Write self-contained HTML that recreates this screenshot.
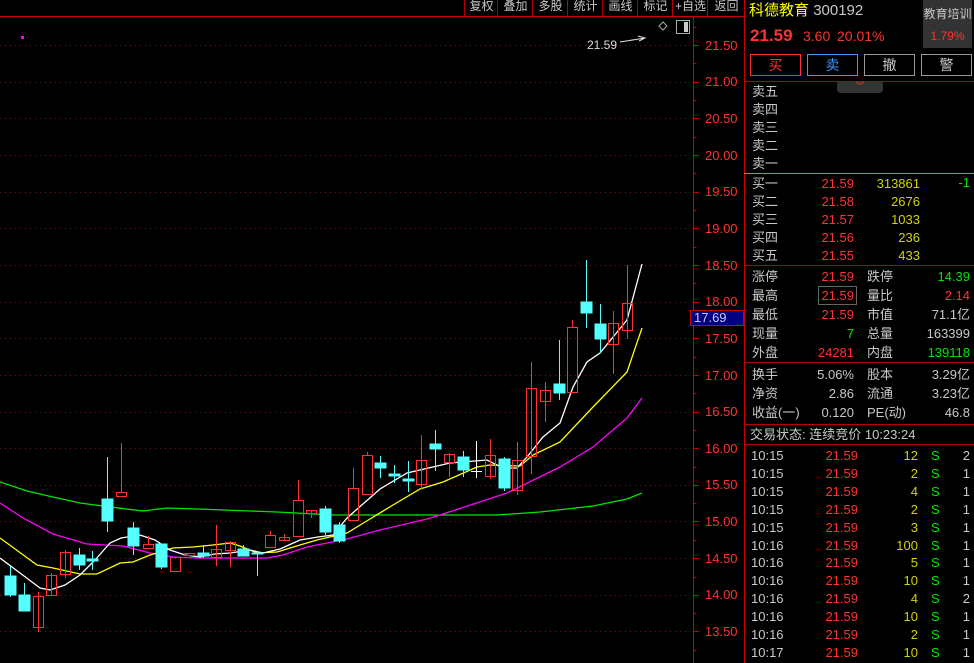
<!DOCTYPE html>
<html><head><meta charset="utf-8"><style>
body{margin:0;background:#000;width:974px;height:663px;overflow:hidden;position:relative;font-family:"Liberation Sans","Noto Sans CJK SC",sans-serif;font-size:13px;color:#c8c8c8}
.a{position:absolute;white-space:nowrap;line-height:16px}
.r{color:#ff3232}.y{color:#d2d200}.g{color:#00e600}.w{color:#c8c8c8}
.hl{position:absolute;height:1px;left:744px;width:230px;background:#b40000}
.btn{position:absolute;top:54px;height:20px;width:49px;text-align:center;line-height:20px;font-size:14px}
.menu{position:absolute;top:0;height:16px;line-height:13px;font-size:12px;text-align:center;border-left:1px solid #b40000;color:#c8c8c8}
</style></head><body>
<svg width="974" height="663" style="position:absolute;left:0;top:0">
<g stroke="#8a1010" stroke-width="1" stroke-dasharray="1,4">
<line x1="0" y1="45.5" x2="690" y2="45.5"/><line x1="0" y1="82.5" x2="690" y2="82.5"/><line x1="0" y1="118.5" x2="690" y2="118.5"/><line x1="0" y1="155.5" x2="690" y2="155.5"/><line x1="0" y1="192.5" x2="690" y2="192.5"/><line x1="0" y1="228.5" x2="690" y2="228.5"/><line x1="0" y1="265.5" x2="690" y2="265.5"/><line x1="0" y1="302.5" x2="690" y2="302.5"/><line x1="0" y1="338.5" x2="690" y2="338.5"/><line x1="0" y1="375.5" x2="690" y2="375.5"/><line x1="0" y1="412.5" x2="690" y2="412.5"/><line x1="0" y1="448.5" x2="690" y2="448.5"/><line x1="0" y1="485.5" x2="690" y2="485.5"/><line x1="0" y1="521.5" x2="690" y2="521.5"/><line x1="0" y1="558.5" x2="690" y2="558.5"/><line x1="0" y1="595.5" x2="690" y2="595.5"/><line x1="0" y1="631.5" x2="690" y2="631.5"/>
</g>
<line x1="0" y1="16.5" x2="744" y2="16.5" stroke="#c80000"/>
<line x1="693.5" y1="16" x2="693.5" y2="663" stroke="#c80000"/>
<line x1="744.5" y1="0" x2="744.5" y2="663" stroke="#c80000"/>
<g stroke="#c80000">
<path d="M693 45.5h6M693 82.5h6M693 118.5h6M693 155.5h6M693 192.5h6M693 228.5h6M693 265.5h6M693 302.5h6M693 338.5h6M693 375.5h6M693 412.5h6M693 448.5h6M693 485.5h6M693 521.5h6M693 558.5h6M693 595.5h6M693 631.5h6"/>
<path d="M693 27.5h3M693 63.5h3M693 100.5h3M693 137.5h3M693 173.5h3M693 210.5h3M693 247.5h3M693 283.5h3M693 320.5h3M693 357.5h3M693 393.5h3M693 430.5h3M693 467.5h3M693 503.5h3M693 540.5h3M693 577.5h3M693 613.5h3M693 650.5h3"/>
</g>
<rect x="21" y="36" width="3" height="3" fill="#ff00ff"/>
<!-- MA lines -->
<polyline fill="none" stroke="#00e600" stroke-width="1.3" points="0,482 27,491 53,497 80,503 110,507 143,511 167,508 197,509 250,511 277,512 333,515 497,515 540,512 593,506 627,499 642,493"/>
<polyline fill="none" stroke="#ff00ff" stroke-width="1.3" points="0,503 23,518 53,534 87,544 123,546 150,553 173,557 197,558 267,558 283,555 307,547 347,539 380,530 427,519 440,515 507,493 560,467 593,447 627,418 642,398"/>
<polyline fill="none" stroke="#ffff00" stroke-width="1.3" points="0,538 37,565 53,568 80,574 97,574 120,563 133,562 150,555 173,548 193,547 213,545 230,543 240,546 257,553 277,552 300,545 317,540 347,533 370,519 393,505 420,489 443,482 477,467 490,465 520,466 533,455 560,442 593,407 627,372 642,328"/>
<polyline fill="none" stroke="#ffffff" stroke-width="1.3" points="0,558 20,573 40,588 50,590 65,585 80,575 95,560 110,543 121,538 140,535 155,540 170,550 185,555 200,557 215,554 230,553 250,550 263,553 280,549 300,540 318,537 333,535 347,518 380,489 407,473 450,463 487,460 503,468 517,468 527,457 543,437 560,423 573,387 587,362 600,353 627,320 642,264"/>
<!-- candles -->
<g stroke="#55ffff" fill="#55ffff">
<line x1="10.5" y1="566" x2="10.5" y2="597"/><rect x="5" y="576" width="11" height="19"/>
<line x1="24.5" y1="583" x2="24.5" y2="611"/><rect x="19" y="595" width="11" height="16"/>
<line x1="79.5" y1="548" x2="79.5" y2="570"/><rect x="74" y="555" width="11" height="10"/>
<line x1="92.5" y1="551" x2="92.5" y2="570"/><rect x="87" y="559" width="11" height="2"/>
<line x1="107.5" y1="457" x2="107.5" y2="532"/><rect x="102" y="499" width="11" height="22"/>
<line x1="133.5" y1="522" x2="133.5" y2="555"/><rect x="128" y="528" width="11" height="18"/>
<line x1="161.5" y1="544" x2="161.5" y2="569"/><rect x="156" y="544" width="11" height="23"/>
<line x1="203.5" y1="545" x2="203.5" y2="558"/><rect x="198" y="553" width="11" height="3"/>
<line x1="243.5" y1="545" x2="243.5" y2="556"/><rect x="238" y="549" width="11" height="7"/>
<line x1="257.5" y1="551" x2="257.5" y2="576"/><rect x="252" y="553" width="11" height="1"/>
<line x1="325.5" y1="506" x2="325.5" y2="535"/><rect x="320" y="509" width="11" height="23"/>
<line x1="339.5" y1="522" x2="339.5" y2="543"/><rect x="334" y="525" width="11" height="16"/>
<line x1="380.5" y1="456" x2="380.5" y2="478"/><rect x="375" y="463" width="11" height="5"/>
<line x1="394.5" y1="465" x2="394.5" y2="483"/><rect x="389" y="474" width="11" height="2"/>
<line x1="408.5" y1="461" x2="408.5" y2="492"/><rect x="403" y="479" width="11" height="2"/>
<line x1="435.5" y1="430" x2="435.5" y2="471"/><rect x="430" y="444" width="11" height="5"/>
<line x1="463.5" y1="451" x2="463.5" y2="477"/><rect x="458" y="457" width="11" height="13"/>
<line x1="504.5" y1="457" x2="504.5" y2="491"/><rect x="499" y="459" width="11" height="29"/>
<line x1="559.5" y1="340" x2="559.5" y2="400"/><rect x="554" y="384" width="11" height="9"/>
<line x1="586.5" y1="260" x2="586.5" y2="328"/><rect x="581" y="302" width="11" height="11"/>
<line x1="600.5" y1="304" x2="600.5" y2="353"/><rect x="595" y="324" width="11" height="15"/>
</g>
<g stroke="#ffffff"><line x1="476.5" y1="441" x2="476.5" y2="478"/><line x1="471" y1="471.5" x2="482" y2="471.5"/></g>
<g stroke="#ff3232" fill="none">
<line x1="38.5" y1="592" x2="38.5" y2="632"/><rect x="33.5" y="596.5" width="10" height="31"/>
<line x1="51.5" y1="573" x2="51.5" y2="596"/><rect x="46.5" y="575.5" width="10" height="20"/>
<line x1="65.5" y1="550" x2="65.5" y2="578"/><rect x="60.5" y="552.5" width="10" height="22"/>
<line x1="121.5" y1="443" x2="121.5" y2="492"/><rect x="116.5" y="492.5" width="10" height="4"/>
<line x1="148.5" y1="536" x2="148.5" y2="544"/><rect x="143.5" y="544.5" width="10" height="4"/>
<rect x="170.5" y="557.5" width="10" height="14"/>
<rect x="184.5" y="553.5" width="10" height="2"/>
<line x1="216.5" y1="525" x2="216.5" y2="566"/><rect x="211.5" y="549.5" width="10" height="8"/>
<line x1="230.5" y1="541" x2="230.5" y2="567"/><rect x="225.5" y="542.5" width="10" height="8"/>
<line x1="270.5" y1="531" x2="270.5" y2="535"/><rect x="265.5" y="535.5" width="10" height="12"/>
<line x1="284.5" y1="534" x2="284.5" y2="541"/><rect x="279.5" y="537.5" width="10" height="3"/>
<line x1="298.5" y1="480" x2="298.5" y2="500"/><rect x="293.5" y="500.5" width="10" height="36"/>
<line x1="311.5" y1="510" x2="311.5" y2="518"/><rect x="306.5" y="510.5" width="10" height="3"/>
<line x1="353.5" y1="468" x2="353.5" y2="488"/><rect x="348.5" y="488.5" width="10" height="32"/>
<line x1="367.5" y1="452" x2="367.5" y2="455"/><rect x="362.5" y="455.5" width="10" height="39"/>
<line x1="421.5" y1="435" x2="421.5" y2="489"/><rect x="416.5" y="460.5" width="10" height="24"/>
<line x1="449.5" y1="453" x2="449.5" y2="477"/><rect x="444.5" y="454.5" width="10" height="8"/>
<line x1="490.5" y1="439" x2="490.5" y2="479"/><rect x="485.5" y="455.5" width="10" height="21"/>
<line x1="517.5" y1="442" x2="517.5" y2="495"/><rect x="512.5" y="460.5" width="10" height="30"/>
<line x1="531.5" y1="362" x2="531.5" y2="474"/><rect x="526.5" y="388.5" width="10" height="68"/>
<line x1="545.5" y1="382" x2="545.5" y2="422"/><rect x="540.5" y="390.5" width="10" height="11"/>
<line x1="572.5" y1="320" x2="572.5" y2="327"/><rect x="567.5" y="327.5" width="10" height="65"/>
<line x1="613.5" y1="311" x2="613.5" y2="374"/><rect x="608.5" y="323.5" width="10" height="21"/>
<line x1="627.5" y1="265" x2="627.5" y2="339"/><rect x="622.5" y="303.5" width="10" height="27"/>
</g>
<path d="M620 42 L645 38 M638 36 L645 38 L639 41" stroke="#ddd" fill="none"/>
<path d="M663 22 L667 26 L663 30 L659 26 Z" stroke="#aaa" fill="none"/>
<rect x="676.5" y="20.5" width="13" height="13" stroke="#aaa" fill="none"/><rect x="684" y="22" width="4" height="10" fill="#ccc"/>
<rect x="690.5" y="310.5" width="53" height="15" fill="#000080" stroke="#c80000"/>
</svg>
<div class="a" style="left:587px;top:37px;font-size:12px;color:#ddd">21.59</div>
<div class="a r" style="left:705px;top:338px;font-size:13px;color:#c8c8ff;left:694px;top:310px">17.69</div>
<div class="menu" style="left:464px;width:33px">复权</div>
<div class="menu" style="left:497px;width:35px">叠加</div>
<div class="menu" style="left:532px;width:35px">多股</div>
<div class="menu" style="left:567px;width:35px">统计</div>
<div class="menu" style="left:602px;width:35px">画线</div>
<div class="menu" style="left:637px;width:35px">标记</div>
<div class="menu" style="left:672px;width:35px">+自选</div>
<div class="menu" style="left:707px;width:37px">返回</div>
<!-- axis labels -->
<div class="a r" style="left:705px;top:38px">21.50</div><div class="a r" style="left:705px;top:74px">21.00</div><div class="a r" style="left:705px;top:111px">20.50</div><div class="a r" style="left:705px;top:148px">20.00</div><div class="a r" style="left:705px;top:184px">19.50</div><div class="a r" style="left:705px;top:221px">19.00</div><div class="a r" style="left:705px;top:258px">18.50</div><div class="a r" style="left:705px;top:294px">18.00</div><div class="a r" style="left:705px;top:331px">17.50</div><div class="a r" style="left:705px;top:368px">17.00</div><div class="a r" style="left:705px;top:404px">16.50</div><div class="a r" style="left:705px;top:441px">16.00</div><div class="a r" style="left:705px;top:477px">15.50</div><div class="a r" style="left:705px;top:514px">15.00</div><div class="a r" style="left:705px;top:551px">14.50</div><div class="a r" style="left:705px;top:587px">14.00</div><div class="a r" style="left:705px;top:624px">13.50</div>
<!-- right panel -->
<div class="a" style="left:749px;top:3px;font-size:15px"><span style="color:#ffff00">科德教育</span> <span class="w">300192</span></div>
<div style="position:absolute;left:923px;top:0;width:49px;height:48px;background:#333"></div>
<div class="a w" style="left:923px;top:6px;width:49px;text-align:center;font-size:12px">教育培训</div>
<div class="a r" style="left:923px;top:28px;width:49px;text-align:center;font-size:12px">1.79%</div>
<div class="a r" style="left:750px;top:26px;font-size:17px;font-weight:bold;line-height:20px">21.59</div>
<div class="a r" style="left:803px;top:28px;font-size:14px">3.60</div>
<div class="a r" style="left:837px;top:28px;font-size:14px">20.01%</div>
<div class="btn r" style="left:750px;border:1px solid #ff3232">买</div>
<div class="btn" style="left:807px;border:1px solid #3c96ff;color:#3c96ff">卖</div>
<div class="btn" style="left:864px;border:1px solid #999;color:#ccc">撤</div>
<div class="btn" style="left:921px;border:1px solid #999;color:#ccc">警</div>
<div class="hl" style="top:81px"></div>
<div style="position:absolute;left:837px;top:82px;width:46px;height:11px;background:#333;border-radius:0 0 4px 4px;color:#ff3232;font-size:9px;text-align:center;line-height:9px">︾</div>
<div class="a" style="left:752px;top:83px;line-height:18px">卖五<br>卖四<br>卖三<br>卖二<br>卖一</div>
<div class="hl" style="top:173px;background:#d28200"></div>
<div class="a" style="left:752px;top:175px;line-height:18px">买一<br>买二<br>买三<br>买四<br>买五</div>
<div class="a r" style="left:800px;top:175px;width:54px;text-align:right;line-height:18px">21.59<br>21.58<br>21.57<br>21.56<br>21.55</div>
<div class="a y" style="left:860px;top:175px;width:60px;text-align:right;line-height:18px">313861<br>2676<br>1033<br>236<br>433</div>
<div class="a g" style="left:940px;top:175px;width:30px;text-align:right">-1</div>
<div class="hl" style="top:265px"></div>
<div class="a" style="left:752px;top:267px;line-height:19px">涨停<br>最高<br>最低<br>现量<br>外盘</div>
<div class="a r" style="left:800px;top:267px;width:54px;text-align:right;line-height:19px">21.59<br>21.59<br>21.59<br><span class="g">7</span><br>24281</div>
<div style="position:absolute;left:818px;top:286px;width:37px;height:17px;border:1px solid #666"></div>
<div class="a" style="left:867px;top:267px;line-height:19px">跌停<br>量比<br>市值<br>总量<br>内盘</div>
<div class="a" style="left:900px;top:267px;width:70px;text-align:right;line-height:19px"><span class="g">14.39</span><br><span class="r">2.14</span><br>71.1亿<br>163399<br><span class="g">139118</span></div>
<div class="hl" style="top:362px"></div>
<div class="a" style="left:752px;top:365px;line-height:19px">换手<br>净资<br>收益(一)</div>
<div class="a" style="left:800px;top:365px;width:54px;text-align:right;line-height:19px">5.06%<br>2.86<br>0.120</div>
<div class="a" style="left:867px;top:365px;line-height:19px">股本<br>流通<br>PE(动)</div>
<div class="a" style="left:900px;top:365px;width:70px;text-align:right;line-height:19px">3.29亿<br>3.23亿<br>46.8</div>
<div class="hl" style="top:424px"></div>
<div class="a" style="left:750px;top:427px">交易状态: 连续竞价 10:23:24</div>
<div class="hl" style="top:444px"></div>
<div class="a" style="left:751px;top:447px;line-height:17.9px">10:15<br>10:15<br>10:15<br>10:15<br>10:15<br>10:16<br>10:16<br>10:16<br>10:16<br>10:16<br>10:16<br>10:17</div>
<div class="a r" style="left:800px;top:447px;width:58px;text-align:right;line-height:17.9px">21.59<br>21.59<br>21.59<br>21.59<br>21.59<br>21.59<br>21.59<br>21.59<br>21.59<br>21.59<br>21.59<br>21.59</div>
<div class="a y" style="left:880px;top:447px;width:38px;text-align:right;line-height:17.9px">12<br>2<br>4<br>2<br>3<br>100<br>5<br>10<br>4<br>10<br>2<br>10</div>
<div class="a g" style="left:931px;top:447px;line-height:17.9px">S<br>S<br>S<br>S<br>S<br>S<br>S<br>S<br>S<br>S<br>S<br>S</div>
<div class="a" style="left:950px;top:447px;width:20px;text-align:right;line-height:17.9px">2<br>1<br>1<br>1<br>1<br>1<br>1<br>1<br>2<br>1<br>1<br>1</div>
</body></html>
